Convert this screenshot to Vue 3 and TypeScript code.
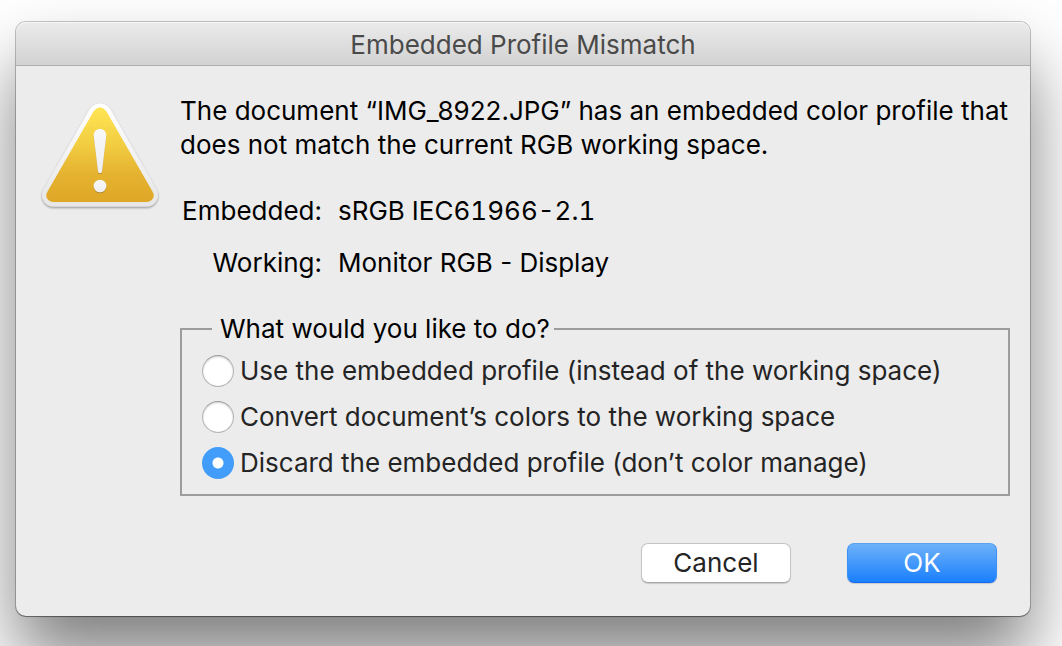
<script setup lang="ts">
import { ref } from 'vue'

interface Choice {
  id: string
  label: string
}

const documentName = 'IMG_8922.JPG'
const profiles = [
  { term: 'Embedded:', value: 'sRGB IEC61966-2.1' },
  { term: 'Working:', value: 'Monitor RGB - Display' },
]
const choices: Choice[] = [
  { id: 'use', label: 'Use the embedded profile (instead of the working space)' },
  { id: 'convert', label: 'Convert document’s colors to the working space' },
  { id: 'discard', label: 'Discard the embedded profile (don’t color manage)' },
]
const selected = ref('discard')
</script>

<template>
  <div class="desktop">
    <form class="dialog" role="dialog" aria-labelledby="dialog-title" @submit.prevent>
      <header class="titlebar">
        <h1 id="dialog-title">Embedded Profile Mismatch</h1>
      </header>

      <div class="body">
        <svg class="warning" viewBox="0 0 124 114" aria-hidden="true">
          <defs>
            <linearGradient id="rim" x1="0" y1="0" x2="0" y2="1">
              <stop offset="0" stop-color="#ffffff" />
              <stop offset="1" stop-color="#e6e6e6" />
            </linearGradient>
            <linearGradient id="gold" x1="0" y1="0" x2="0" y2="1">
              <stop offset="0" stop-color="#ffe554" />
              <stop offset="0.35" stop-color="#f3d043" />
              <stop offset="0.7" stop-color="#e5b330" />
              <stop offset="1" stop-color="#dfa726" />
            </linearGradient>
            <linearGradient id="mark" x1="0" y1="0" x2="0" y2="1">
              <stop offset="0" stop-color="#f8f8f8" />
              <stop offset="1" stop-color="#eeeeee" />
            </linearGradient>
            <filter id="rim-shadow" x="-10%" y="-10%" width="120%" height="125%">
              <feDropShadow dx="0" dy="1.2" stdDeviation="1" flood-color="#000" flood-opacity="0.42" />
            </filter>
            <filter id="mark-shadow" x="-30%" y="-10%" width="160%" height="130%">
              <feDropShadow dx="0" dy="1" stdDeviation="0.5" flood-color="#7a5200" flood-opacity="0.5" />
            </filter>
          </defs>
          <path
            d="M51.5 9.5 Q55.5 3.5 62 3.5 Q68.500 3.500 72.500 9.500 L118.500 89.500 Q121.500 95.500 118.500 100.500 Q115.500 106.500 108 106.500 H16 Q8.500 106.500 5.500 100.500 Q2.500 95.500 5.500 89.500 Z"
            fill="url(#rim)"
            filter="url(#rim-shadow)"
          />
          <path
            d="M55.500 11.500 Q58.500 7.500 62 7.500 Q65.500 7.500 68.500 11.500 L114.500 91.500 Q117 96 114.500 99 Q112.500 102 108 102 H16 Q11.500 102 9.500 99 Q7 96 9.500 91.500 Z"
            fill="url(#gold)"
          />
          <g fill="url(#mark)" filter="url(#mark-shadow)">
            <path d="M55.700 35.500 C55.700 31.500 58.200 29 62 29 C65.800 29 68.300 31.500 68.300 35.500 L64 71.500 Q63.800 73.200 62 73.200 Q60.200 73.200 60 71.500 Z" />
            <circle cx="62" cy="86" r="6.300" />
          </g>
        </svg>

        <div class="content">
          <p class="message">
            The document “{{ documentName }}” has an embedded color profile that does not match the
            current RGB working space.
          </p>

          <dl class="profiles">
            <template v-for="profile in profiles" :key="profile.term">
              <dt>{{ profile.term }}</dt>
              <dd>{{ profile.value }}</dd>
            </template>
          </dl>

          <fieldset>
            <legend>What would you like to do?</legend>
            <label v-for="choice in choices" :key="choice.id" :for="choice.id" class="choice">
              <input :id="choice.id" v-model="selected" type="radio" name="action" :value="choice.id" />
              <span>{{ choice.label }}</span>
            </label>
          </fieldset>

          <div class="actions">
            <button type="button" class="cancel">Cancel</button>
            <button type="submit" class="ok">OK</button>
          </div>
        </div>
      </div>
    </form>
  </div>
</template>

<style>
body {
  margin: 0;
  background: #fff;
}
</style>

<style scoped>
.desktop {
  box-sizing: border-box;
  display: flex;
  min-height: 100vh;
  padding: 22px 32px 30px 16px;
  overflow: hidden;
  font-family: Inter, "Liberation Sans", sans-serif;
  font-size: 26px;
  line-height: 34px;
  color: #000;
}

.dialog {
  flex: 1;
  min-width: 0;
  border-radius: 10px;
  background: #ececec;
  box-shadow:
    0 0 0 1px rgba(0, 0, 0, 0.22),
    0 1px 1px rgba(0, 0, 0, 0.3),
    0 42px 70px rgba(0, 0, 0, 0.5);
}

.titlebar {
  box-sizing: border-box;
  height: 44px;
  border-bottom: 1px solid #adadad;
  border-radius: 10px 10px 0 0;
  background: linear-gradient(#ebebeb, #d2d2d2);
  box-shadow: inset 0 1px 0 #f6f6f6;
}

h1 {
  margin: 0;
  padding-top: 6px;
  font-size: 26px;
  font-weight: 400;
  line-height: 34px;
  text-align: center;
  color: #4a4a4a;
}

.body {
  display: flex;
  gap: 18px;
  padding: 28px 20px 32px 22px;
}

.warning {
  flex: none;
  width: 124px;
  height: 114px;
  margin-top: 6px;
}

.content {
  flex: 1;
  min-width: 0;
}

.message {
  margin: 0;
}

.profiles {
  display: grid;
  grid-template-columns: 142px 1fr;
  gap: 18px 16px;
  margin: 32px 0;
}

dt {
  text-align: right;
}

dd {
  margin: 0;
}

dd:first-of-type {
  font-variant-numeric: tabular-nums;
}

fieldset {
  min-width: 0;
  margin: 0;
  padding: 2px 20px 8px;
  border: 2px solid #9c9c9c;
}

legend {
  margin-left: 10px;
  padding: 0 4px 0 8px;
}

.choice {
  display: flex;
  align-items: center;
  gap: 6px;
  height: 46px;
  color: #242424;
}

.choice input {
  appearance: none;
  flex: none;
  box-sizing: border-box;
  width: 32px;
  height: 32px;
  margin: 0;
  border: 1px solid #b4b4b4;
  border-top-color: #9c9c9c;
  border-radius: 50%;
  background: #fff;
  box-shadow: inset 0 1px 2px rgba(0, 0, 0, 0.2);
}

.choice input:checked {
  border: 0;
  background: radial-gradient(circle, #fff 5px, #429cfa 6px);
  box-shadow: none;
}

.actions {
  display: flex;
  justify-content: flex-end;
  gap: 56px;
  padding: 47px 13px 0 0;
}

button {
  box-sizing: border-box;
  width: 150px;
  height: 40px;
  padding: 0;
  border: 1px solid #c4c4c4;
  border-bottom-color: #a8a8a8;
  border-radius: 7px;
  background: #fff;
  box-shadow: 0 1px 1px rgba(0, 0, 0, 0.15);
  color: #242424;
  font-family: inherit;
  font-size: 26px;
  line-height: 34px;
}

.ok {
  border-color: #5aa2ee #3a8ff5 #136af5;
  background: linear-gradient(#6fb3f9, #187efd) border-box;
  color: #fff;
}
</style>
